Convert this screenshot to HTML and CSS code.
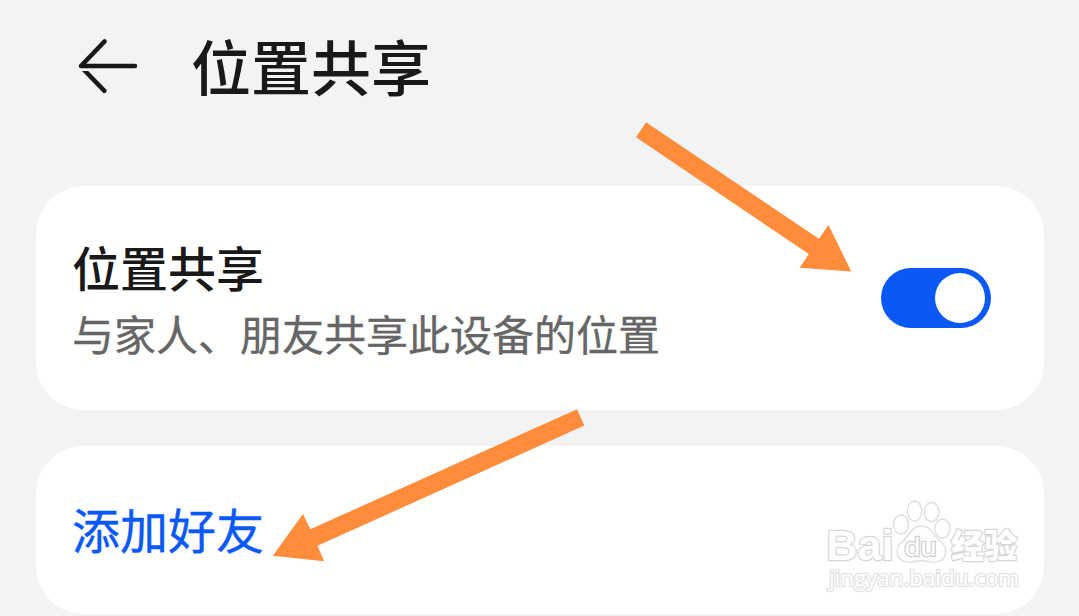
FILE: index.html
```html
<!DOCTYPE html>
<html lang="zh-CN">
<head>
<meta charset="utf-8">
<title>位置共享</title>
<link rel="stylesheet" href="styles.css">
</head>
<body>
<main class="screen">
  <header class="header">
    <svg class="back" width="64" height="60" viewBox="76 36 64 60" aria-label="返回">
      <path d="M135 66H81L104.500 41.500"/>
      <path class="back-lower" d="M82 71H88.200L106 89.200A2.300 2.300 0 0 1 102.800 92.500Z"/>
    </svg>
    <h1 class="title">位置共享</h1>
  </header>
  <section class="card card-share">
    <div class="copy">
      <h2 class="name">位置共享</h2>
      <p class="desc">与家人、朋友共享此设备的位置</p>
    </div>
    <div class="switch" role="switch" aria-checked="true"><span class="knob"></span></div>
  </section>
  <section class="card card-add">
    <a class="add">添加好友</a>
  </section>
  <svg class="overlay" width="1079" height="616" viewBox="0 0 1079 616">
    <g class="pointer">
      <path d="M646 122.300L819 238.800L828.500 225L851.300 271.500L799.700 267.800L808.800 254L636 137.300Z"/>
      <path d="M577 409.300L310.200 529.300L303 514L272.800 555.800L324.200 561.300L317.500 545.800L584.300 425.500Z"/>
    </g>
    <g class="mark">
      <text class="latin" x="826.500" y="560" textLength="67" lengthAdjust="spacingAndGlyphs">Bai</text>
      <ellipse cx="901" cy="524.500" rx="7.500" ry="9.500"/>
      <ellipse cx="914.500" cy="511" rx="7.200" ry="10"/>
      <ellipse cx="931.500" cy="512" rx="7.500" ry="9.500"/>
      <ellipse cx="942.500" cy="528.500" rx="7.500" ry="9.500"/>
      <path d="M921 526C911 526 909 537 903 541C897 545 896 551 898 556C901 562 907 563 914 561.500C919 560.500 924 560.500 929 561.500C936 563 942 562 945 556C947 550 945 545 940 541C933 536 932 526 921 526Z"/>
      <text class="du" x="904.500" y="556" textLength="32" lengthAdjust="spacingAndGlyphs">du</text>
      <text class="han" x="951" y="557.500" textLength="66" lengthAdjust="spacingAndGlyphs">经验</text>
      <text class="site" x="829" y="586" textLength="190" lengthAdjust="spacingAndGlyphs">jingyan.baidu.com</text>
    </g>
  </svg>
</main>
</body>
</html>
```
FILE: styles.css
```css
* { box-sizing: border-box; }
body {
  margin: 0;
  overflow: hidden;
  background: #f1f3f5;
  font-family: "Noto Sans CJK SC", sans-serif;
}
.screen {
  position: relative;
  display: flex;
  flex-direction: column;
  width: 1079px;
  height: 616px;
  padding: 0 35px 0 36px;
}
.header {
  display: flex;
  flex: none;
  align-items: flex-start;
  gap: 51px;
  height: 186px;
  padding: 36px 0 0 40px;
}
.back { flex: none; }
.back path {
  fill: none;
  stroke: #191919;
  stroke-width: 4.6;
  stroke-linecap: round;
  stroke-linejoin: round;
}
.back .back-lower { fill: #191919; stroke: none; }
.title {
  margin: 0;
  color: #191919;
  font-size: 60px;
  font-weight: 500;
  line-height: 58px;
}
.card {
  display: flex;
  flex: none;
  justify-content: space-between;
  border-radius: 48px;
  background: #fff;
}
.card-share {
  align-items: center;
  height: 224px;
  padding: 0 53px 0 36px;
}
.copy { padding-top: 3px; }
.name {
  margin: 0;
  color: #191919;
  font-size: 48px;
  font-weight: 500;
  line-height: 66px;
}
.desc {
  margin: 0;
  color: #666;
  font-size: 42px;
  line-height: 68px;
}
.desc, .add { -webkit-text-stroke: 0.35px currentColor; }
.switch {
  display: flex;
  justify-content: flex-end;
  width: 110px;
  height: 60px;
  padding: 5px 6px;
  border-radius: 30px;
  background: #0a59f7;
}
.knob { width: 50px; height: 50px; border-radius: 50%; background: #fff; }
.card-add {
  align-items: center;
  height: 168px;
  margin-top: 36px;
  padding: 0 36px 4px;
}
.add { color: #0a59f7; font-size: 48px; line-height: 72px; }
.overlay { position: absolute; top: 0; left: 0; pointer-events: none; }
.pointer { fill: #ff8c3a; }
.mark {
  fill: #fff;
  stroke: #dedede;
  stroke-width: 1.4;
  stroke-linejoin: round;
}
.mark text { paint-order: stroke; stroke-width: 2.4; }
.mark .latin { font: bold 43px "Liberation Sans", sans-serif; stroke: #d6d6d6; }
.mark .du { font: 26px "Liberation Sans", sans-serif; stroke: #cfcfcf; }
.mark .han { font: 900 33px "Noto Sans CJK SC", sans-serif; stroke: #d6d6d6; }
.mark .site { font: 21px "Open Sans", sans-serif; stroke: #e2e2e2; }
```
